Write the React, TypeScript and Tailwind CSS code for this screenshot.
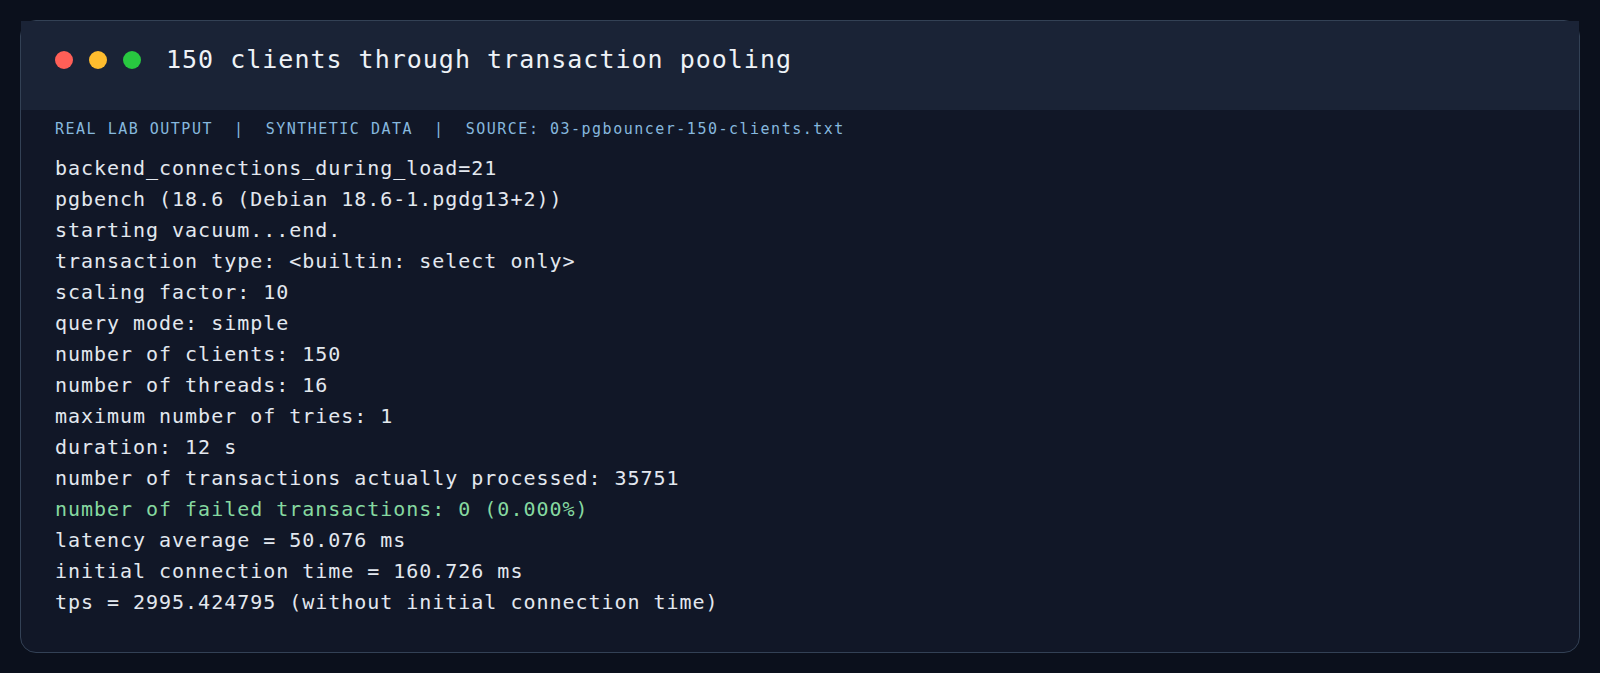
const lines: { text: string; ok?: boolean }[] = [
  { text: "backend_connections_during_load=21" },
  { text: "pgbench (18.6 (Debian 18.6-1.pgdg13+2))" },
  { text: "starting vacuum...end." },
  { text: "transaction type: <builtin: select only>" },
  { text: "scaling factor: 10" },
  { text: "query mode: simple" },
  { text: "number of clients: 150" },
  { text: "number of threads: 16" },
  { text: "maximum number of tries: 1" },
  { text: "duration: 12 s" },
  { text: "number of transactions actually processed: 35751" },
  { text: "number of failed transactions: 0 (0.000%)", ok: true },
  { text: "latency average = 50.076 ms" },
  { text: "initial connection time = 160.726 ms" },
  { text: "tps = 2995.424795 (without initial connection time)" },
];

const mono = "font-['DejaVu_Sans_Mono','Liberation_Mono',monospace]";

export default function App() {
  return (
    <div className="min-h-screen bg-[#0b101c] p-5">
      <div className={`h-[633px] rounded-2xl border border-[#334155] bg-[#111727] ${mono}`}>
        {/* title bar */}
        <div className="flex h-[89px] items-center bg-[#1a2336] pb-[11px] pl-[34px]">
          <div className="flex gap-4">
            <span className="h-[18px] w-[18px] rounded-full bg-[#ff5f57]" />
            <span className="h-[18px] w-[18px] rounded-full bg-[#febc2e]" />
            <span className="h-[18px] w-[18px] rounded-full bg-[#28c840]" />
          </div>
          <h1 className="ml-[25px] text-[25px] tracking-[1px] text-[#eef2f7]">
            150 clients through transaction pooling
          </h1>
        </div>

        <div className="px-[34px] pt-[9px]">
          <p className="whitespace-pre text-[15px] leading-5 tracking-[1.5px] text-[#86b8de]">
            REAL LAB OUTPUT{"  |  "}SYNTHETIC DATA{"  |  "}SOURCE: 03-pgbouncer-150-clients.txt
          </p>
          <pre className={`mt-[14px] text-[20px] leading-[31px] tracking-[0.97px] text-[#e3e8ef] ${mono}`}>
            {lines.map((l) => (
              <div key={l.text} className={l.ok ? "text-[#86d9a0]" : undefined}>
                {l.text}
              </div>
            ))}
          </pre>
        </div>
      </div>
    </div>
  );
}
